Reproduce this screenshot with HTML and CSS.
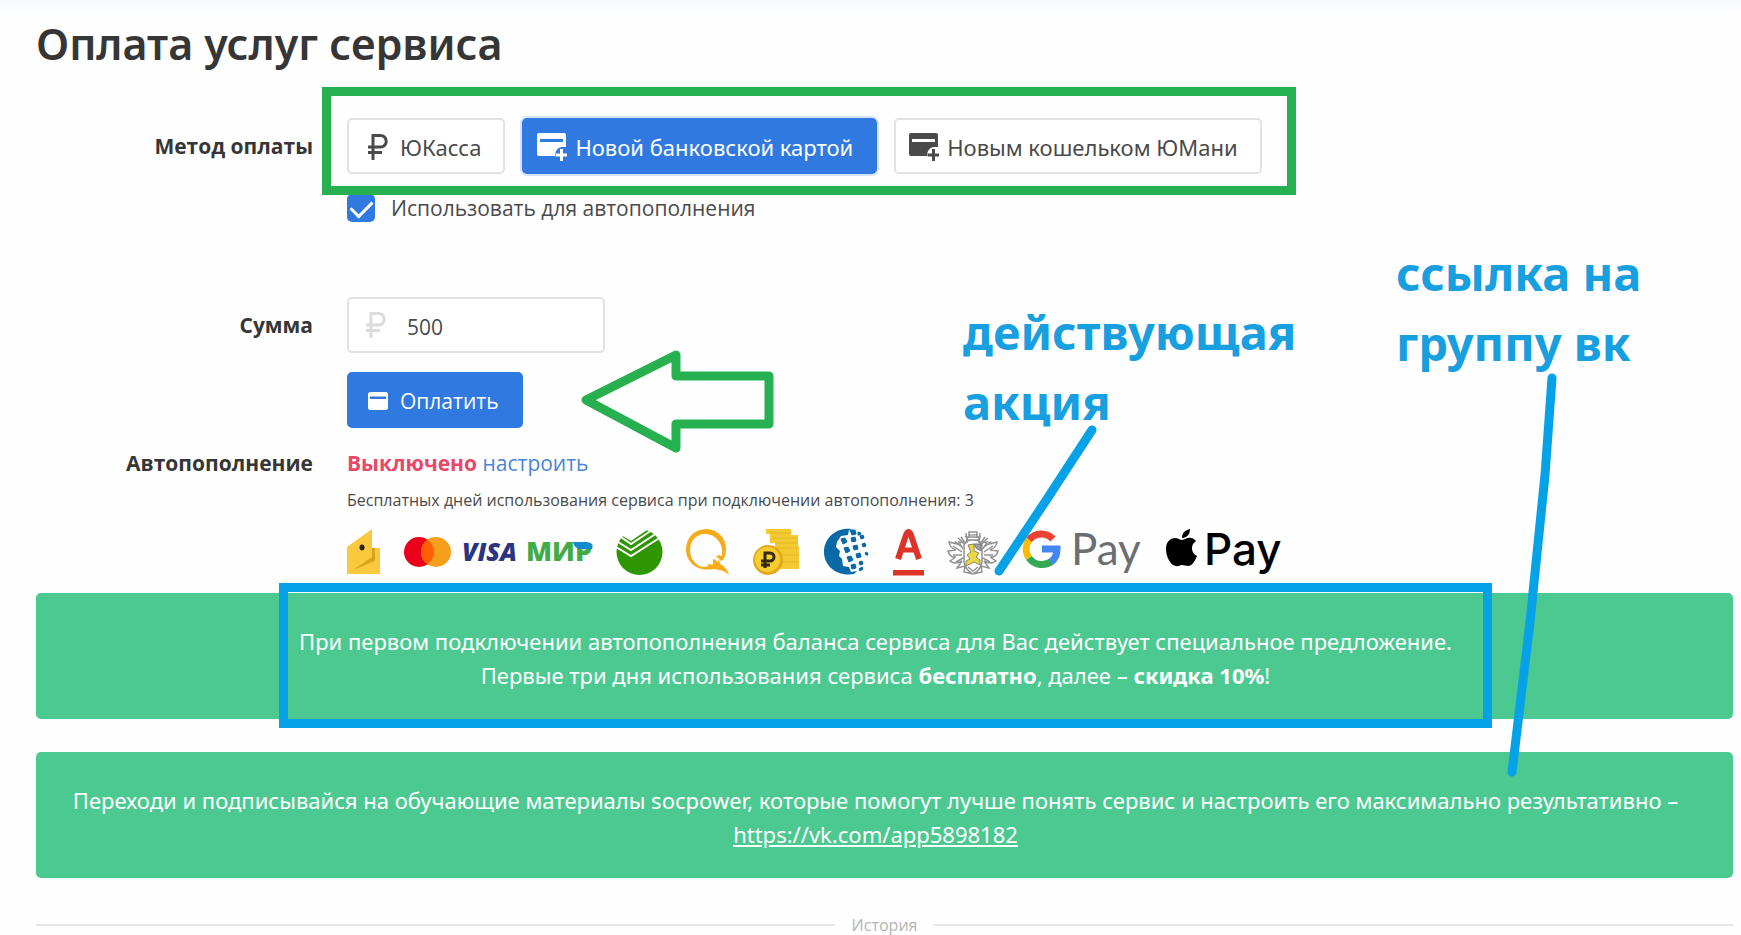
FILE: index.html
```html
<!DOCTYPE html>
<html lang="ru">
<head>
<meta charset="utf-8">
<title>Оплата услуг сервиса</title>
<link rel="stylesheet" href="styles.css">
</head>
<body>
<svg width="0" height="0" class="sprite" aria-hidden="true">
  <symbol id="ruble" viewBox="0 0 20 26"><path d="M5 26V1.500H12.500a5.700 5.700 0 0 1 0 11.500H0M0 18.500H14" fill="none" stroke="currentColor" stroke-width="3"/></symbol>
  <symbol id="card-add" viewBox="0 0 30 28"><path fill="currentColor" fill-rule="evenodd" d="M2 0H27a2 2 0 0 1 2 2V14H25C21 14 18 18 18 23H2a2 2 0 0 1-2-2V2a2 2 0 0 1 2-2ZM3 6V9H26V6Z"/><path d="M24.500 16V28M18.500 22H30.500" stroke="currentColor" stroke-width="3"/></symbol>
  <symbol id="card" viewBox="0 0 20 18"><path fill="currentColor" fill-rule="evenodd" d="M1.500 0H18.500L20 1.500V16.500L18.500 18H1.500L0 16.500V1.500ZM2 4.500V7H18V4.500Z"/></symbol>
</svg>
<main class="page">
  <h1 class="title">Оплата услуг сервиса</h1>

  <form class="form">
    <div class="row">
      <span class="label label-control">Метод оплаты</span>
      <div class="field">
        <div class="methods">
          <button type="button" class="button button-method"><svg class="icon-ruble"><use href="#ruble"/></svg>ЮКасса</button>
          <button type="button" class="button button-method button-primary button-focus button-card"><svg class="icon-card-add"><use href="#card-add"/></svg>Новой банковской картой</button>
          <button type="button" class="button button-method button-card"><svg class="icon-card-add"><use href="#card-add"/></svg>Новым кошельком ЮМани</button>
        </div>
        <label class="check"><input type="checkbox" class="checkbox" checked>Использовать для автопополнения</label>
      </div>
    </div>

    <div class="row row-sum">
      <label class="label label-control" for="sum">Сумма</label>
      <div class="field">
        <div class="amount"><input id="sum" class="input" type="text" value="500"><svg class="icon-ruble amount-icon"><use href="#ruble"/></svg></div>
        <button type="button" class="button button-primary button-pay"><svg class="icon-card"><use href="#card"/></svg>Оплатить</button>
      </div>
    </div>

    <div class="row row-auto">
      <span class="label">Автопополнение</span>
      <div class="field">
        <div class="status"><strong class="off">Выключено</strong> <a class="link" href="#">настроить</a></div>
        <p class="hint">Бесплатных дней использования сервиса при подключении автопополнения: 3</p>
        <div class="logos">
          <svg width="33" height="48" viewBox="0 0 33 48"><path d="M0 19 25 1V20H33V46H0Z" fill="#fbc93d"/><path d="M25 20H28V33L6 42 25 29Z" fill="#d9a520"/><path d="M28 20H33V46H0L28 33Z" fill="#fbc93d"/><ellipse cx="15" cy="19.500" rx="2.500" ry="3" fill="#2c2415"/></svg>
          <div class="cards">
            <svg width="47" height="48" viewBox="0 0 47 48"><circle cx="15" cy="24" r="15" fill="#eb001b"/><circle cx="32" cy="24" r="15" fill="#f79e1b"/><path d="M23.500 11.700a15 15 0 0 1 0 24.600a15 15 0 0 1 0-24.600Z" fill="#ff5f00"/></svg>
            <svg width="56" height="48" viewBox="0 0 56 48"><text x="1" y="33" class="logo-visa">VISA</text></svg>
            <svg width="65" height="48" viewBox="0 0 65 48"><text x="-1" y="33" class="logo-mir">МИР</text><path d="M46 14H58C64 14 67 16 65 21H54C49 21 47 18 46 14Z" fill="#1489cf"/></svg>
          </div>
          <svg width="46" height="48" viewBox="0 0 46 48"><circle cx="23.500" cy="24" r="23" fill="#2d9600"/><path d="M0 0H34L15 13 0 4Z" fill="#fff"/><path d="M5 9 15 16 36 2M2 14 15 22 41 5M0 19 15 28 45 9" fill="none" stroke="#fff" stroke-width="2"/></svg>
          <svg width="43" height="48" viewBox="0 0 43 48"><path fill="#f8ab18" fill-rule="evenodd" d="M20 1a20 20 0 0 1 20 20c0 4-1 8-3 11l-2 1c-2-2-3-5-6-5 3 2 5 5 5 8 4 2 8 6 9 11-5-5-10-5-16-6C12 44 0 35 0 21A20 20 0 0 1 20 1Zm-1 5C9 6 4 14 4 22s6 17 14 17l5-1c-1-1-2-2 1-2l2 1c3-2-1-5 2-6l4 3c2-3-2-4 0-7l4 1C38 15 29 6 19 6Z"/></svg>
          <svg width="47" height="48" viewBox="0 0 47 48"><path d="M13 1H38V7H45V18H46V41H22V15H17V6H13Z" fill="#f5c931"/><path d="M16 5H39M18 10H44M22 15H44M23 20H44M22 27H46M24 34H46" stroke="#e3b52b" stroke-width="1"/><circle cx="15" cy="32" r="15" fill="#e3a91c"/><circle cx="14.500" cy="31.500" r="12.500" fill="#f8cd31"/><path d="M12 40V25H17a4 4 0 0 1 0 8H8M8 37H17" fill="none" stroke="#332a10" stroke-width="3"/></svg>
          <svg width="45" height="48" viewBox="0 0 45 48"><path d="M28 1C12-1 0 10 0 24S13 49 30 46L33 43 27 44 25 39 19 38 18 31 15 28 16 23 12 19 13 14 17 8 24 7 25 2Z" fill="#0868a8"/><g fill="#0868a8" stroke="#0868a8" stroke-linejoin="round"><path d="m26 2 5 0 1 4-4 1ZM34 4l3 1-1 2-2 0ZM17 11l4-1 2 4-4 2ZM27 10l4-1 1 4-4 1ZM36 8l3-1 1 3-3 1ZM20 20l4-1 2 4-4 2ZM29 18l4-1 1 4-4 1ZM38 16l3-1 1 3-3 1ZM23 29l4-1 2 4-4 2ZM32 26l4-1 1 4-4 1ZM41 25l2-1 1 3-2 0ZM27 37l4-1 1 4-4 1ZM35 34l3-1 1 3-3 1ZM35 41l3-2 1 2-3 2Z"/></g></svg>
          <svg width="31" height="48" viewBox="0 0 31 48"><path d="M5 31 13 7Q15.500 1 18 7L26 31" fill="none" stroke="#dc3429" stroke-width="6"/><path d="M8 22H23" stroke="#dc3429" stroke-width="5"/><path d="M0 42H31V47.500H0Z" fill="#dc3429"/></svg>
          <svg width="50" height="48" viewBox="0 0 50 48"><g fill="none" stroke="#929292" stroke-width="1.500"><path d="M21 10V4H29V10M20 12 18 9H32L30 12ZM16 17Q17 12 25 12T34 17V34Q32 43 25 46 18 43 16 34ZM14 19Q4 11 9 16L1 14Q2 20 8 22L0 23Q2 30 8 29L2 33Q7 37 14 33L9 40 17 38 16 44 25 46 34 44 33 38 41 40 36 33Q43 37 48 33L42 29Q48 30 50 23L42 22Q48 20 49 14L41 16Q46 11 36 19M5 18 14 24M5 27 14 27M8 34 15 30M45 18 36 24M45 27 36 27M42 34 35 30M10 10 17 16M40 10 33 16M18 5 19 15M32 5 31 15"/><path d="M13 9 17 15 11 14 15 21M37 9 33 15 39 14 35 21M20 39 25 43 30 39"/></g><path d="M20 17 26 16V23L31 25 28 29 32 32V37L26 34 18 38V33L22 31 19 27 23 24Z" fill="#ecd646" stroke="#8e8b65"/><path d="M26 16 33 16V23L28 20ZM21 7H29" stroke="#777" fill="#a1a1a1"/></svg>
          <svg width="120" height="48" viewBox="0 0 120 48"><g fill="none" stroke-width="7"><path d="M31 11A16 16 0 0 0 7 12" stroke="#ea4335"/><path d="M7 12A16 16 0 0 0 7 30" stroke="#fbbc04"/><path d="M7 30A16 16 0 0 0 30 33" stroke="#34a853"/><path d="M20 21H35A16 16 0 0 1 29 34" stroke="#4285f4"/></g><text x="49" y="37" class="logo-gpay">Pay</text></svg>
          <svg width="116" height="48" viewBox="0 0 116 48"><path d="M16 10C16 5 19 2 24 1 24 6 21 10 16 10ZM16 12C19 12 21 9 25 10 27 10 29 12 30 13 24 17 25 25 31 28 29 33 26 38 22 38 20 38 18 37 16 37S12 39 10 38C5 38 0 29 0 21 0 14 4 10 9 10 12 10 14 12 16 12Z" fill="#000"/><text x="38" y="37" class="logo-apay">Pay</text></svg>
        </div>
      </div>
    </div>
  </form>

  <section class="notice">
    <div class="promo">При первом подключении автопополнения баланса сервиса для Вас действует специальное предложение.<br>Первые три дня использования сервиса <strong>бесплатно</strong>, далее – <strong>скидка 10%</strong>!</div>
  </section>
  <section class="notice">
    Переходи и подписывайся на обучающие материалы socpower, которые помогут лучше понять сервис и настроить его максимально результативно –<br><a class="notice-link" href="https://vk.com/app5898182">https://vk.com/app5898182</a>
  </section>
  <div class="divider">История</div>

  <svg class="marks" width="1741" height="935" viewBox="0 0 1741 935" aria-hidden="true">
    <path class="mark-green" d="M586 400 676 355V376H769V424H676V448Z"/>
    <path class="mark-blue" d="M1092 430 1047 499 999 571M1552 378 1545 475 1530 622 1512 772"/>
  </svg>
  <div class="note note-promo">действующая<br>акция</div>
  <div class="note note-group">ссылка на<br>группу вк</div>
</main>
</body>
</html>
```
FILE: styles.css
```css
* { box-sizing: border-box; }
body {
  margin: 0;
  background: linear-gradient(#f6f9fe, #fefefe 16px);
  color: #4a4a4a;
  font: 21px/34px "Open Sans", "Noto Sans", sans-serif;
}
svg { flex: none; overflow: visible; }
.sprite { position: absolute; }
.page { position: relative; padding: 14px 8px 0 36px; }
.title,
.button-method,
.notice,
.note { font-family: "Noto Sans", "Open Sans", sans-serif; }
.title {
  margin: 0 0 44px;
  color: #363636;
  font-size: 43px;
  font-weight: 600;
  line-height: 60px;
}
.row { display: grid; grid-template-columns: 277px 1fr; column-gap: 34px; }
.row-sum { margin-top: 74px; }
.row-auto { margin-top: 18px; }
.label { color: #363636; font-weight: 700; text-align: right; }
.label-control { padding-top: 11px; }
.methods { position: relative; display: flex; gap: 17px; width: max-content; }
.methods::after {
  content: "";
  position: absolute;
  inset: -31px -34px -21px -25px;
  border: 9px solid #27b050;
  pointer-events: none;
}
.button {
  display: flex;
  align-items: center;
  height: 56px;
  padding: 2px 22px 0 19px;
  gap: 12px;
  border: 2px solid #e2e2e2;
  border-radius: 5px;
  background: #fff;
  color: #4a4a4a;
  font-family: inherit;
  font-size: 21px;
  white-space: nowrap;
}
.button.button-method { font-family: "Noto Sans", "Open Sans", sans-serif; font-size: 22px; }
.button-card { padding: 2px 22px 0 13px; gap: 8px; }
.button-primary { border-color: #3079e1; background: #3079e1; color: #fff; }
.button-focus { box-shadow: 0 0 0 2px #d5e4fa; }
.button-pay { margin-top: 19px; }
.icon-ruble { width: 20px; height: 26px; }
.icon-card-add { width: 30px; height: 28px; }
.icon-card { width: 20px; height: 18px; }
.check { display: flex; align-items: center; gap: 16px; height: 30px; margin-top: 19px; width: max-content; }
.checkbox {
  appearance: none;
  width: 28px;
  height: 28px;
  margin: 0;
  border-radius: 5px;
  background: #3079e1;
  display: grid;
  place-items: center;
}
.checkbox:checked::after {
  content: "";
  width: 18px;
  height: 10px;
  margin-bottom: 3px;
  border: solid #fff;
  border-width: 0 0 3px 3px;
  rotate: -45deg;
}
.amount { position: relative; width: 258px; }
.input {
  display: block;
  width: 100%;
  height: 56px;
  padding: 4px 16px 0 58px;
  border: 2px solid #e2e2e2;
  border-radius: 5px;
  background: #fff;
  color: #4a4a4a;
  font: inherit;
}
.amount-icon { position: absolute; left: 19px; top: 15px; color: #dbdbdb; }
.off { color: #e8486a; }
.link { color: #4a84d8; text-decoration: none; }
.hint { margin: 8px 0 16px; font-size: 16px; line-height: 24px; }
.logos { display: flex; gap: 24px; height: 48px; }
.cards { display: flex; gap: 10px; }
.logo-visa { font: italic 800 25px "Open Sans", sans-serif; fill: #2b3480; }
.logo-mir { font: 800 27px "Open Sans", sans-serif; fill: #43ab45; }
.logo-gpay { font: 400 44px Lato, sans-serif; fill: #6b6e73; }
.logo-apay { font: 500 44px Inter, sans-serif; fill: #000; }
.notice {
  margin-top: 17px;
  padding: 31px 44px 27px 26px;
  border-radius: 5px;
  background: #4bc990;
  color: #fff;
  font-size: 22px;
  text-align: center;
}
.notice + .notice { margin-top: 33px; }
.promo { position: relative; width: max-content; margin: 0 auto; }
.promo::after {
  content: "";
  position: absolute;
  inset: -41px -40px -36px -20px;
  border: 9px solid #06a2e8;
  pointer-events: none;
}
.notice-link { color: #fff; text-decoration: underline; }
.divider {
  display: flex;
  align-items: center;
  gap: 17px;
  margin-top: 37px;
  color: #b5b5b5;
  font-size: 16px;
  line-height: 20px;
}
.divider::before, .divider::after { content: ""; flex: 1; height: 2px; background: #e6e6e6; }
.marks { position: absolute; left: 0; top: 0; pointer-events: none; }
.mark-green { fill: none; stroke: #27b050; stroke-width: 9; stroke-linejoin: round; }
.mark-blue { fill: none; stroke: #06a2e8; stroke-width: 9; stroke-linecap: round; stroke-linejoin: round; }
.note {
  position: absolute;
  color: #179fdf;
  font-size: 47px;
  font-weight: 700;
  line-height: 70px;
  white-space: nowrap;
}
.note-promo { left: 963px; top: 297px; }
.note-group { left: 1396px; top: 238px; }
```
